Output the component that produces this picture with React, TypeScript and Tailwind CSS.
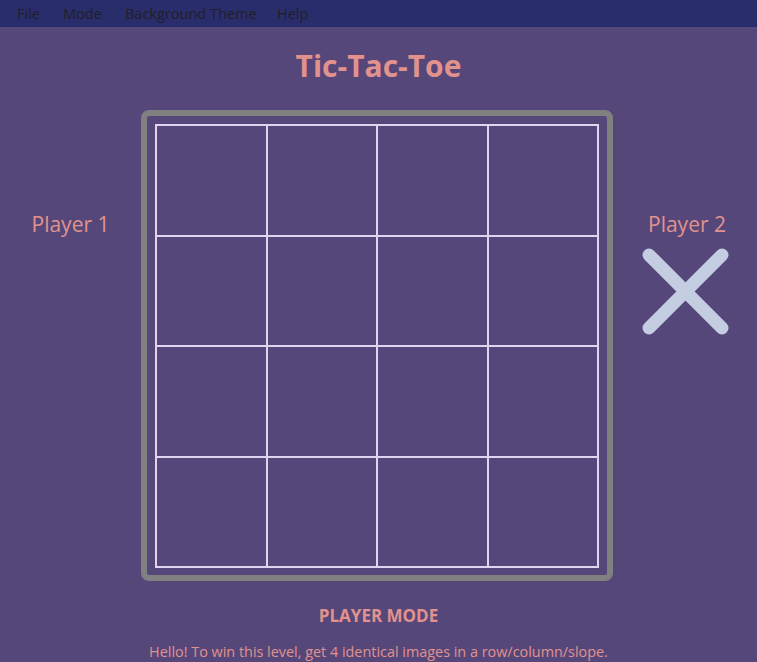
import React from "react";

const font = { fontFamily: '"Open Sans", "Noto Sans", sans-serif' };

export default function App() {
  const menu = [
    { label: "File", w: "w-[46px]" },
    { label: "Mode", w: "w-[62px]" },
    { label: "Background Theme", w: "w-[152px]" },
    { label: "Help", w: "w-[40px]" },
  ];
  const cells = Array.from({ length: 16 });

  return (
    <div style={font} className="w-[757px] h-[662px] overflow-hidden bg-[#55477a] flex flex-col">
      {/* Menu bar */}
      <div className="h-[28px] bg-[#2a2d6b] flex items-center pl-[17px] text-[14.5px] text-[#1f1f2a]">
        {menu.map((m) => (
          <span key={m.label} className={m.w}>
            {m.label}
          </span>
        ))}
      </div>

      {/* Title */}
      <h1 className="text-center text-[30px] font-bold text-[#e2928d] mt-[19px] leading-[40px]">
        Tic-Tac-Toe
      </h1>

      {/* Main row */}
      <div className="flex mt-[24px]">
        <div className="w-[141px] flex justify-center pt-[100px]">
          <span className="text-[21px] text-[#e2928d] leading-[28px]">Player 1</span>
        </div>

        <div className="w-[472px] h-[471px] border-[6px] border-[#808080] rounded-[8px] p-[8px]">
          <div className="grid grid-cols-4 w-[444px] h-[444px] border-l-2 border-t-2 border-[#ddd6ee]">
            {cells.map((_, i) => (
              <div key={i} className="border-r-2 border-b-2 border-[#ddd6ee]" />
            ))}
          </div>
        </div>

        <div className="flex-1 flex flex-col items-center pt-[100px] pl-[4px]">
          <span className="text-[21px] text-[#e2928d] leading-[28px]">Player 2</span>
          <svg width="90" height="90" viewBox="0 0 90 90" className="mt-[9px] -ml-[3px]">
            <line x1="8" y1="8" x2="81" y2="81" stroke="#c5cde3" strokeWidth="13" strokeLinecap="round" />
            <line x1="81" y1="8" x2="8" y2="81" stroke="#c5cde3" strokeWidth="13" strokeLinecap="round" />
          </svg>
        </div>
      </div>

      {/* Footer */}
      <div className="text-center mt-[24px] text-[17px] font-bold text-[#e2928d] leading-[22px]">
        PLAYER MODE
      </div>
      <div className="text-center mt-[15px] text-[14.4px] text-[#e2928d] leading-[20px]">
        Hello! To win this level, get 4 identical images in a row/column/slope.
      </div>
    </div>
  );
}
